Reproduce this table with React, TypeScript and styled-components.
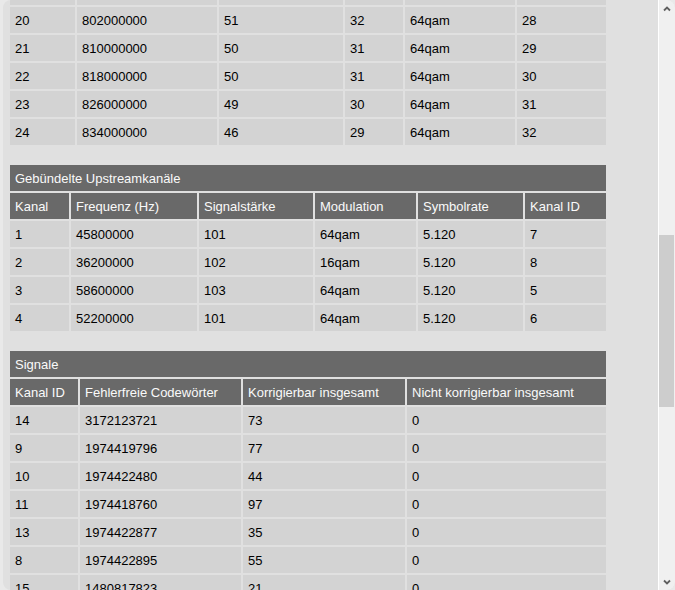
import { useLayoutEffect, useRef } from "react";
import styled, { createGlobalStyle } from "styled-components";

const GlobalStyle = createGlobalStyle`
  html, body {
    margin: 0;
    padding: 0;
    height: 100%;
    overflow: hidden;
    background: #e9e9e9;
  }
  body {
    font-family: "Liberation Sans", Arial, sans-serif;
    font-size: 13px;
  }
`;

const Frame = styled.div`
  display: flex;
  height: 590px;
  margin-left: 3px;
  border-radius: 8px;
  overflow: hidden;
  background: #e0e0e0;
`;

const Pane = styled.div`
  flex: 1;
  overflow: hidden;
  padding-left: 5px;
`;

const Table = styled.table`
  table-layout: fixed;
  border-collapse: separate;
  border-spacing: 2px;
  width: 600px;
  margin-bottom: 16px;
`;

const Cell = styled.td`
  background: #d3d3d3;
  color: #000;
  height: 26px;
  padding: 0 5px;
  text-align: left;
  vertical-align: middle;
  white-space: nowrap;
  overflow: hidden;
`;

const HeadCell = styled.th`
  background: #696969;
  color: #fafafa;
  font-weight: normal;
  height: 26px;
  padding: 0 5px;
  text-align: left;
  vertical-align: middle;
  white-space: nowrap;
  overflow: hidden;
`;

const Col = styled.col<{ $w: number }>`
  width: ${(p) => p.$w}px;
`;

// gezeichnete Scrollleiste rechts
const Scrollbar = styled.div`
  display: flex;
  flex-direction: column;
  width: 16px;
  border-left: 1px solid #ffffff;
  background: #f0f0f0;
`;

const ArrowButton = styled.div`
  height: 17px;
  display: flex;
  align-items: center;
  justify-content: center;
  color: #606060;
`;

const Track = styled.div<{ $offset: number }>`
  flex: 1;
  padding-top: ${(p) => p.$offset}px;
`;

const Thumb = styled.div<{ $size: number }>`
  height: ${(p) => p.$size}px;
  width: 15px;
  background: #cdcdcd;
`;

interface Section {
  title?: string;
  head?: string[];
  cols: number[];
  rows: (string | number)[][];
}

// sichtbarer Ausschnitt der Downstream-Liste (Kanal 19 liegt halb oben ausserhalb)
const downstream: Section = {
  cols: [65, 140, 124, 58, 110, 89],
  rows: [
    [19, 794000000, 51, 32, "64qam", 27],
    [20, 802000000, 51, 32, "64qam", 28],
    [21, 810000000, 50, 31, "64qam", 29],
    [22, 818000000, 50, 31, "64qam", 30],
    [23, 826000000, 49, 30, "64qam", 31],
    [24, 834000000, 46, 29, "64qam", 32],
  ],
};

const upstream: Section = {
  title: "Gebündelte Upstreamkanäle",
  cols: [59, 126, 114, 101, 105, 81],
  head: ["Kanal", "Frequenz (Hz)", "Signalstärke", "Modulation", "Symbolrate", "Kanal ID"],
  rows: [
    [1, 45800000, 101, "64qam", "5.120", 7],
    [2, 36200000, 102, "16qam", "5.120", 8],
    [3, 58600000, 103, "64qam", "5.120", 5],
    [4, 52200000, 101, "64qam", "5.120", 6],
  ],
};

const signale: Section = {
  title: "Signale",
  cols: [68, 161, 162, 199],
  head: ["Kanal ID", "Fehlerfreie Codewörter", "Korrigierbar insgesamt", "Nicht korrigierbar insgesamt"],
  rows: [
    [14, 3172123721, 73, 0],
    [9, 1974419796, 77, 0],
    [10, 1974422480, 44, 0],
    [11, 1974418760, 97, 0],
    [13, 1974422877, 35, 0],
    [8, 1974422895, 55, 0],
    [15, 1480817823, 21, 0],
  ],
};

function Chevron({ down }: { down?: boolean }) {
  return (
    <svg width="8" height="6" viewBox="0 0 8 6">
      <polyline
        points={down ? "1,1.5 4,4.5 7,1.5" : "1,4.5 4,1.5 7,4.5"}
        fill="none"
        stroke="currentColor"
        strokeWidth="1.8"
      />
    </svg>
  );
}

function DataTable({ section, anchorRow, anchorRef }: {
  section: Section;
  anchorRow?: number;
  anchorRef?: React.Ref<HTMLTableRowElement>;
}) {
  return (
    <Table>
      <colgroup>
        {section.cols.map((w, i) => <Col key={i} $w={w} />)}
      </colgroup>
      {section.title && (
        <thead>
          <tr>
            <HeadCell colSpan={section.cols.length}>{section.title}</HeadCell>
          </tr>
          <tr>
            {section.head?.map((h) => <HeadCell key={h}>{h}</HeadCell>)}
          </tr>
        </thead>
      )}
      <tbody>
        {section.rows.map((row, r) => (
          <tr key={r} ref={r === anchorRow ? anchorRef : undefined}>
            {row.map((v, c) => <Cell key={c}>{v}</Cell>)}
          </tr>
        ))}
      </tbody>
    </Table>
  );
}

export default function App() {
  const paneRef = useRef<HTMLDivElement>(null);
  const anchorRef = useRef<HTMLTableRowElement>(null);

  // Ansicht so scrollen, dass Kanal 20 oben bei y=7 steht
  useLayoutEffect(() => {
    const pane = paneRef.current;
    const row = anchorRef.current;
    if (!pane || !row) return;
    pane.scrollTop += row.getBoundingClientRect().top - pane.getBoundingClientRect().top - 7;
  }, []);

  return (
    <>
      <GlobalStyle />
      <Frame>
        <Pane ref={paneRef}>
          <DataTable section={downstream} anchorRow={1} anchorRef={anchorRef} />
          <DataTable section={upstream} />
          <DataTable section={signale} />
        </Pane>
        <Scrollbar>
          <ArrowButton><Chevron /></ArrowButton>
          <Track $offset={218}>
            <Thumb $size={172} />
          </Track>
          <ArrowButton><Chevron down /></ArrowButton>
        </Scrollbar>
      </Frame>
    </>
  );
}
